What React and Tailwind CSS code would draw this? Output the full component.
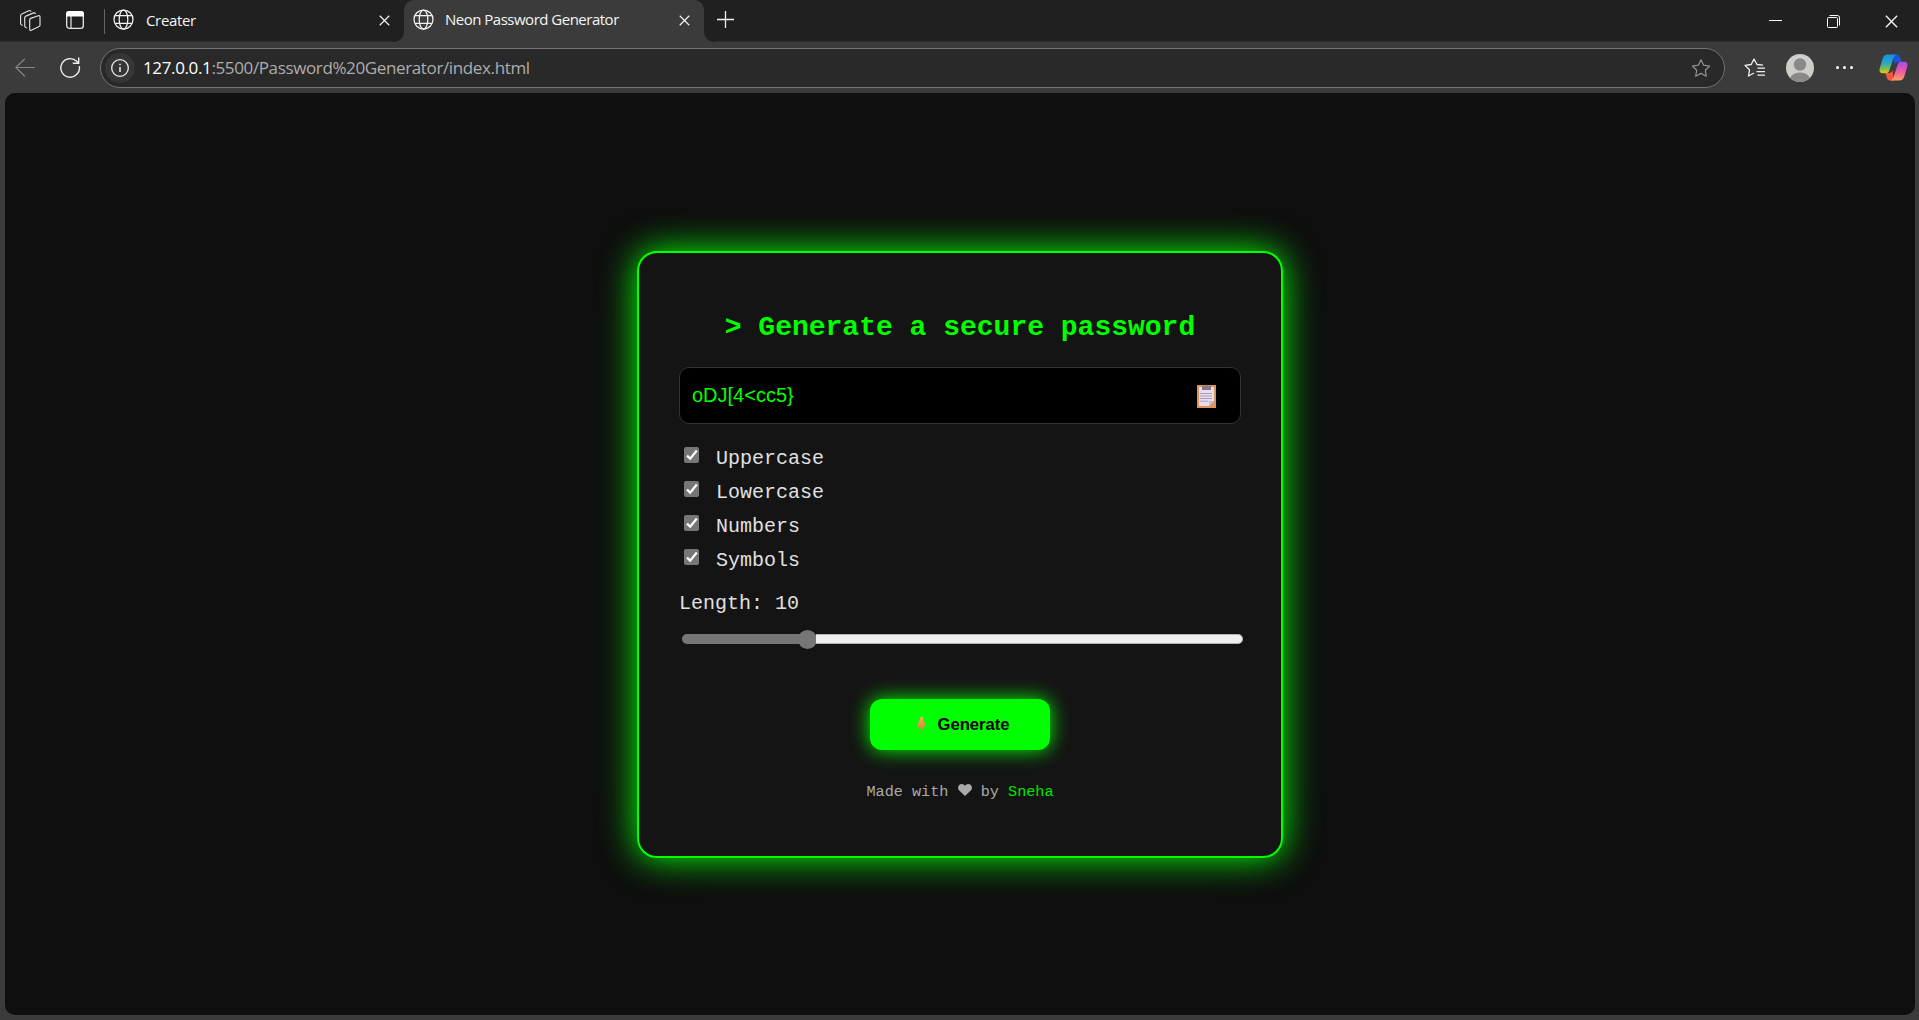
const Globe = () => (
  <svg className="h-[21px] w-[21px] shrink-0" viewBox="0 0 21 21" fill="none" stroke="#f2f2f2" strokeWidth="1.25">
    <circle cx="10.5" cy="10.5" r="9.5" />
    <ellipse cx="10.5" cy="10.5" rx="4.3" ry="9.5" />
    <path d="M2 6.7h17M2 14.3h17" />
  </svg>
);

const Close = ({ className }) => (
  <svg className={className} viewBox="0 0 12 12" fill="none" stroke="#f2f2f2" strokeWidth="1.3">
    <path d="M.8.8l10.4 10.4M11.2.8L.8 11.2" />
  </svg>
);

const TitleBar = () => (
  <div className="flex h-[42px] items-start bg-[#202020] text-[#f5f5f5] shadow-[inset_0_-1px_0_#303030]">
    <svg className="mt-[9px] ml-[19px] h-[23px] w-[23px]" viewBox="0 0 23 23" fill="none" stroke="#e0e0e0" strokeWidth="1.15" strokeLinejoin="round" strokeLinecap="round">
      <path d="M11.6 9.400l7.700-2.700q1.700-.5 1.700 1.200v8q0 1.200-1 1.600l-7.700 3.800q-1.600.600-1.600-1.200v-9q0-1.300.900-1.700z" />
      <path d="M7.400 18.800q-1.700-.2-1.700-1.700V8.800q0-1.200 1.200-1.700l7.600-3.200q1.400-.5 1.800.8" />
      <path d="M3.300 16.300q-1.700-.2-1.700-1.700V6.700q0-1.200 1.100-1.700l7.100-3.300q1.400-.5 2 .5" />
    </svg>
    <svg className="mt-[11px] ml-6 h-[18px] w-[18px]" viewBox="0 0 18 18" fill="none">
      <rect x=".7" y=".7" width="16.6" height="16.6" rx="2.6" stroke="#e6e6e6" strokeWidth="1.3" />
      <path d="M0 5.4V3q0-3 3-3h12q3 0 3 3v2.4z" fill="#fff" />
      <path d="M5 5v12" stroke="#e6e6e6" strokeWidth="1.2" />
    </svg>
    <div className="mt-[9px] ml-[20px] h-[25px] w-px bg-[#666]" />
    <div className="mt-[9px] ml-[8px] flex w-[287px] items-center">
      <Globe />
      <span className="ml-3 font-['Open_Sans',sans-serif] text-[15px] leading-5 tracking-[-0.35px]">Creater</span>
      <Close className="mt-[2px] mr-[10px] ml-auto h-[11px] w-[11px]" />
    </div>
    <div className="flex h-[42px]">
      <div className="-ml-2 h-[42px] w-3 bg-[#3b3b3b]">
        <div className="h-full w-full rounded-br-[10px] bg-[#202020]" />
      </div>
      <div className="flex w-[300px] items-start rounded-t-[10px] bg-[#3b3b3b] pt-[9px] pl-[9px]">
        <Globe />
        <span className="ml-[11px] font-['Open_Sans',sans-serif] text-[15px] leading-5 tracking-[-0.5px] whitespace-nowrap">Neon Password Generator</span>
        <Close className="mt-[6px] mr-[14px] ml-auto h-[11px] w-[11px]" />
      </div>
      <div className="h-[42px] w-3 bg-[#3b3b3b]">
        <div className="h-full w-full rounded-bl-[10px] bg-[#202020]" />
      </div>
    </div>
    <svg className="mt-[11px] ml-[1px] h-[17px] w-[17px]" viewBox="0 0 17 17" stroke="#f2f2f2" strokeWidth="1.3">
      <path d="M8.500 0v17M0 8.500h17" />
    </svg>
    <div className="mr-[21px] ml-auto flex pt-[15px]">
      <div className="mt-[5px] h-px w-[13px] bg-white" />
      <svg className="ml-[45px] h-[13px] w-[13px]" viewBox="0 0 13 13" fill="none" stroke="#fff">
        <rect x=".5" y="2.5" width="10" height="10" rx="1" />
        <path d="M2.5.5h8q2 0 2 2v8" />
      </svg>
      <Close className="ml-[45px] h-[13px] w-[13px]" />
    </div>
  </div>
);

const STAR = "M10 1.3l2.65 5.4 5.95.85-4.3 4.2 1 5.95L10 14.9l-5.3 2.8 1-5.95-4.3-4.2 5.95-.85z";

const Copilot = () => (
  <svg className="h-[27px] w-[29px]" viewBox="0 0 29 27">
    <defs>
      <linearGradient id="left" x1="0" y1="0" x2="0" y2="1">
        <stop offset="0" stopColor="#168fe8" />
        <stop offset=".45" stopColor="#27a7c5" />
        <stop offset=".75" stopColor="#77bd58" />
        <stop offset="1" stopColor="#f2c50a" />
      </linearGradient>
      <linearGradient id="right" x1="0" y1="0" x2="0" y2="1">
        <stop offset="0" stopColor="#a64bea" />
        <stop offset=".5" stopColor="#ee5aa0" />
        <stop offset="1" stopColor="#ffa066" />
      </linearGradient>
    </defs>
    <path d="M14 .5h4q2.400 0 3.200 2.800L22.500 8H19q-2.500 0-3.500 3z" fill="#1c55d4" />
    <path d="M15 26.500h-4q-2.400 0-3.200-2.800L6.500 19H10q2.500 0 3.500-3z" fill="#f5573c" />
    <path d="M8.500.5h9q-2 .3-3 3.500l-4 12q-1 3.200-3.500 3.200H3.800Q-.3 19.200.7 14.500L3.700 4.500Q5 .5 8.500.5z" fill="url(#left)" />
    <path d="M20.500 26.500h-9q2-.3 3-3.500l4-12q1-3.200 3.500-3.200h3.200q4.100 0 3.100 4.700l-3 10q-1.300 4-4.800 4z" fill="url(#right)" />
  </svg>
);

const Toolbar = () => (
  <div className="flex h-[51px] items-start bg-[#3b3b3b]">
    <svg className="mt-[16px] ml-[15px] h-[19px] w-5" viewBox="0 0 20 19" fill="none" stroke="#858585" strokeWidth="1.2">
      <path d="M20 9.500H.8M9.800.8L.8 9.500l9 8.700" />
    </svg>
    <svg className="mt-[15px] ml-[25px] h-[22px] w-[21px]" viewBox="0 0 21 22" fill="none" stroke="#ededed" strokeWidth="1.4">
      <path d="M19.300 9.200a9.300 9.300 0 1 1-2.600-4.900l1.900 2M12.800 6.300h5.900V.5" />
    </svg>
    <div className="mt-[6px] ml-[19px] flex h-10 w-[1625px] items-center rounded-full border border-[#747474] bg-[#292929] pr-[13px] pl-[4px]">
      <div className="flex h-[30px] w-[30px] items-center justify-center rounded-full bg-[#363636]">
        <svg className="h-[18px] w-[18px]" viewBox="0 0 18 18" fill="none" stroke="#eee" strokeWidth="1.3">
          <circle cx="9" cy="9" r="8.3" />
          <path d="M9 8v5M9 4.700v1.600" strokeWidth="1.5" />
        </svg>
      </div>
      <div className="ml-[8px] font-['Open_Sans',sans-serif] text-[17px] leading-6 tracking-[-0.37px] text-[#adadad]">
        <span className="text-white">127.0.0.1</span>:5500/Password%20Generator/index.html
      </div>
      <svg className="ml-auto h-5 w-5" viewBox="0 0 20 19" fill="none" stroke="#929292" strokeWidth="1.2" strokeLinejoin="round"><path d={STAR} /></svg>
    </div>
    <svg className="mt-[16px] ml-[19px] h-5 w-[21px]" viewBox="0 0 21 20" fill="none" stroke="#efefef" strokeWidth="1.3" strokeLinejoin="round">
      <path d="M19 7.200l-6-.7L10 1 7.200 6.500 1 7.400l4.500 4.400-1 6.200 5.500-3" />
      <path d="M13.500 10.200H21M12.500 13.700H21M13.500 17.200H21" />
    </svg>
    <svg className="mt-3 ml-[21px] h-7 w-7" viewBox="0 0 28 28">
      <defs><clipPath id="avatar"><circle cx="14" cy="14" r="14" /></clipPath></defs>
      <g clipPath="url(#avatar)">
        <rect width="28" height="28" fill="#cfcdca" />
        <circle cx="14" cy="10.5" r="6.2" fill="#8c8885" />
        <ellipse cx="14" cy="26.5" rx="10.5" ry="8" fill="#8c8885" />
      </g>
    </svg>
    <div className="mt-[24px] ml-[22px] flex gap-1">
      <i className="h-[3px] w-[3px] rounded-full bg-white" />
      <i className="h-[3px] w-[3px] rounded-full bg-white" />
      <i className="h-[3px] w-[3px] rounded-full bg-white" />
    </div>
    <div className="mt-[12px] ml-[26px]"><Copilot /></div>
  </div>
);

const Check = ({ label }) => (
  <div className="flex h-[34px] items-start">
    <div className="mt-[5px] ml-[5px] flex h-4 w-[15px] items-center justify-center rounded-[2px] bg-[#767676]">
      <svg className="h-3 w-3" viewBox="0 0 12 12" fill="none" stroke="#fff" strokeWidth="2.2"><path d="M1 6.600l3.200 3L10.800 1.500" /></svg>
    </div>
    <span className="ml-[17px] pt-[4px] text-xl leading-[26px]">{label}</span>
  </div>
);

const Clipboard = () => (
  <svg className="mt-[1px] h-6 w-[19px]" viewBox="0 0 19 24">
    <path d="M0 1h19v23H0z" fill="#dc935c" />
    <path d="M2 3h15v14l-5 5H2z" fill="#e6ddef" />
    <path d="M12 22v-5h5z" fill="#c5b8d2" />
    <path d="M5 2h3q1.500-3 3 0h3v4H5z" fill="#857a87" />
    <path d="M3 9.500h12M3 12h12M3 14.500h12M3 17.200h8" stroke="#aaa0b5" strokeWidth="1" />
  </svg>
);

const Card = () => (
  <div className="flex h-[607px] w-[646px] flex-col rounded-[20px] border-2 border-[#0f0] bg-[#141414] px-10 font-['Liberation_Mono',monospace] text-[#e0e0e0] shadow-[0_0_35px_#00ff00,0_0_80px_rgba(0,255,0,0.06)]">
    <h1 className="mt-[59px] text-center text-[28px] leading-8 font-bold whitespace-pre text-[#0f0]">&gt; Generate a secure password</h1>
    <div className="mt-[23px] flex h-[57px] shrink-0 items-center justify-between rounded-[10px] border border-[#333] bg-black pr-6 pl-3">
      <span className="font-['Liberation_Sans',sans-serif] text-xl leading-6 text-[#0f0]">oDJ[4&lt;cc5&#125;</span>
      <Clipboard />
    </div>
    <div className="mt-[18px]">
      <Check label="Uppercase" />
      <Check label="Lowercase" />
      <Check label="Numbers" />
      <Check label="Symbols" />
    </div>
    <div className="mt-[14px] text-xl leading-6">Length: 10</div>
    <div className="-mr-[2px] mt-[14px] ml-[3px] flex h-[19px] items-center">
      <div className="h-[10px] w-[125px] rounded-l-full bg-[#767676]" />
      <div className="-ml-[9px] h-[19px] w-[19px] rounded-full bg-[#767676]" />
      <div className="-ml-[1px] h-[10px] grow rounded-r-full border border-l-0 border-[#b2b2b2] bg-[#efefef]" />
    </div>
    <div className="mt-[50px] flex h-[51px] w-[180px] items-center justify-center self-center rounded-[12px] bg-[#0f0] pt-[2px] pl-[6px] font-['Liberation_Sans',sans-serif] text-[16.6px] font-bold text-black shadow-[0_0_20px_#00ff00]">
      <svg className="mr-[12px] h-[17px] w-[9px]" viewBox="0 0 9 16" preserveAspectRatio="none">
        <defs><linearGradient id="bolt" x1="0" y1="0" x2="0" y2="1"><stop stopColor="#f8b04d" /><stop offset="1" stopColor="#f1603f" /></linearGradient></defs>
        <path d="M3.500 0h3L5.700 5.500H9L3.500 16l.7-6.200H0z" fill="url(#bolt)" />
      </svg>
      <span>Generate</span>
    </div>
    <div className="mt-[32px] flex h-5 items-center justify-center text-[15.2px] leading-5 whitespace-pre text-[#aaa]">
      <span>Made with </span>
      <svg className="-mt-[3px] h-3 w-[14px]" viewBox="0 0 14 12"><path d="M7 12L1.200 6.600C-1.600 3.200 1.200 0 3.700 0 5.300 0 6.500.9 7 2 7.500.9 8.700 0 10.300 0c2.500 0 5.300 3.200 2.500 6.600z" fill="#aaa" /></svg>
      <span> by </span><span className="text-[#00e500]">Sneha</span>
    </div>
  </div>
);

export default function App() {
  return (
    <div className="flex h-[1020px] w-[1919px] flex-col overflow-hidden bg-[#3b3b3b]">
      <TitleBar />
      <Toolbar />
      <div className="mr-[4px] ml-[5px] flex h-[922px] items-center justify-center overflow-hidden rounded-[10px] bg-[#0f0f0f]">
        <Card />
      </div>
    </div>
  );
}
